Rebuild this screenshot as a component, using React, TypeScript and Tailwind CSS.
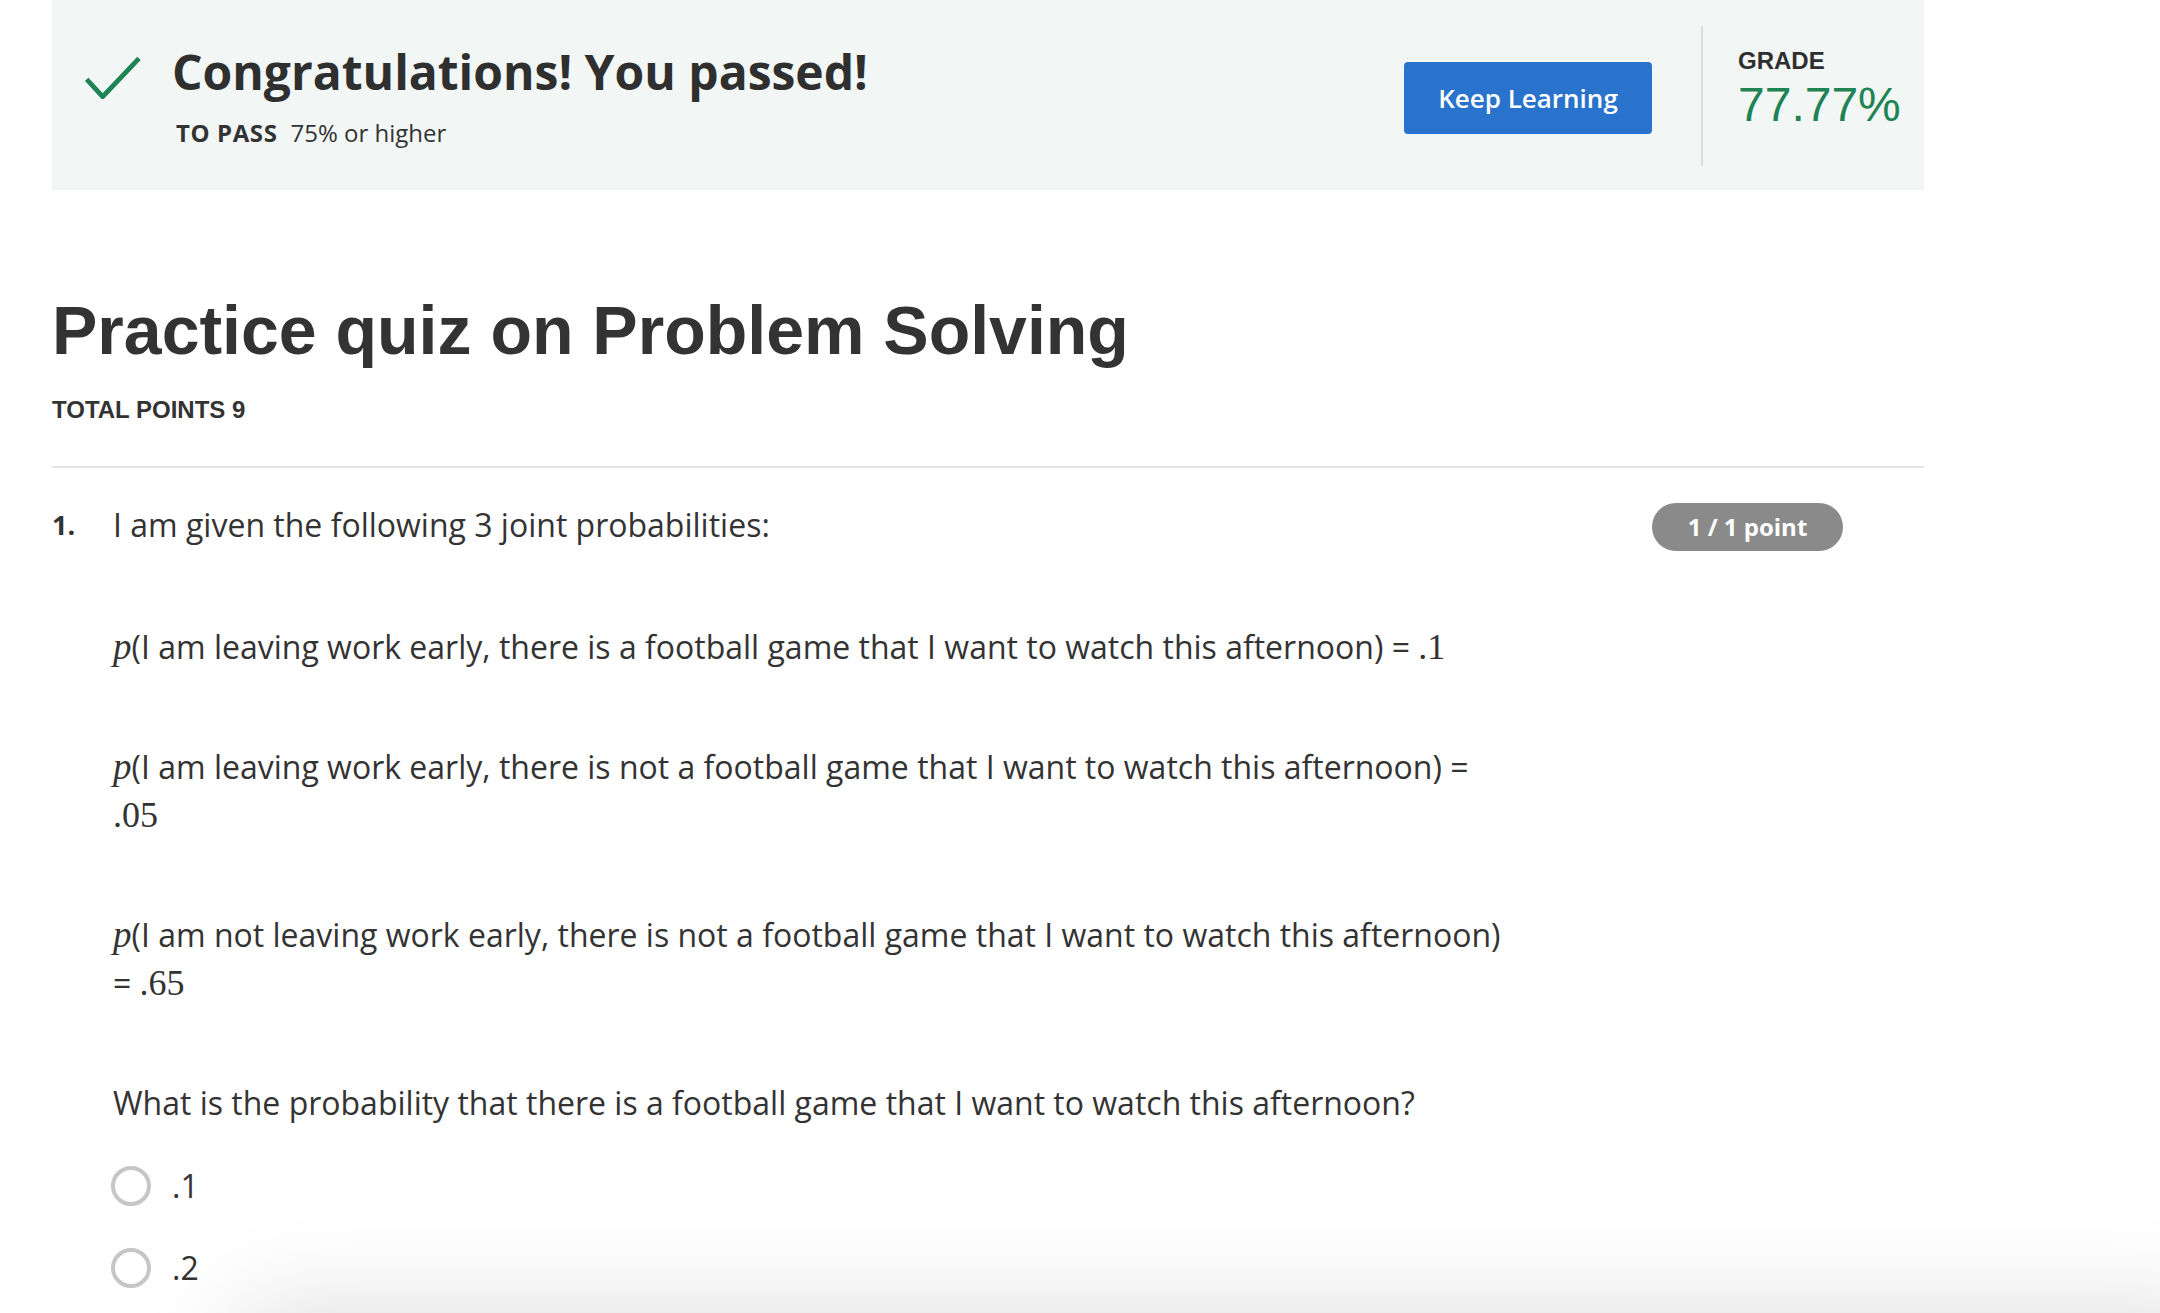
const Radio = ({ label, className }: { label: string; className?: string }) => (
    <div className={`flex h-[48px] items-center ${className ?? ""}`}>
        <span className="ml-[-2px] h-[40px] w-[40px] rounded-full border-[4px] border-[#c6c6c6] bg-white" />
        <span className="ml-[21px] text-[32px] leading-[48px]">{label}</span>
    </div>
);

const Pvar = () => <span className="font-['Liberation_Serif',serif] text-[37px] italic leading-none">p</span>;
const Num = ({ v }: { v: string }) => <span className="font-['Liberation_Serif',serif] text-[36px] leading-none">{v}</span>;

export default function App() {
    return (
        <div className="relative h-[1313px] w-full overflow-hidden bg-white font-['Open_Sans',sans-serif] text-[#333]">
            <div className="ml-[52px] w-[1872px]">
                {/* result banner */}
                <div className="flex h-[190px] bg-[#f2f7f5]">
                    <svg className="ml-[33px] mt-[55px] h-[44px] w-[56px] shrink-0" viewBox="0 0 56 44" fill="none">
                        <path d="M1.7 24.3 L17.7 41.7 L54 3.3" stroke="#1f8354" strokeWidth="4.8" />
                    </svg>
                    <div className="ml-[31px] pt-[43px]">
                        <h1 className="text-[48px] font-bold leading-[58px] text-[#2f2f2f]">Congratulations! You passed!</h1>
                        <div className="ml-[4px] mt-[17px] text-[24px] leading-[30px]">
                            <span className="font-bold tracking-[0.6px]">TO PASS</span>
                            <span className="ml-[13px]">75% or higher</span>
                        </div>
                    </div>
                    <div className="flex-1" />
                    <button className="mt-[62px] h-[72px] w-[248px] shrink-0 rounded-[4px] bg-[#2a73cc] text-[26px] font-semibold text-white">
                        Keep Learning
                    </button>
                    <div className="ml-[49px] mt-[26px] h-[140px] w-[2px] shrink-0 bg-[#dedede]" />
                    <div className="ml-[35px] w-[186px] shrink-0 font-['Liberation_Sans',Arial,sans-serif]">
                        <div className="mt-[47px] text-[24px] font-bold leading-[28px] text-[#2f2f2f]">GRADE</div>
                        <div className="mt-[2px] text-[48px] leading-[56px] text-[#1f8354]">77.77%</div>
                    </div>
                </div>

                {/* quiz header */}
                <h2 className="mt-[100px] font-['Liberation_Sans',Arial,sans-serif] text-[68px] font-bold leading-[80px] text-[#333]">
                    Practice quiz on Problem Solving
                </h2>
                <div className="mt-[26px] font-['Liberation_Sans',Arial,sans-serif] text-[24px] font-bold leading-[28px] text-[#333]">
                    TOTAL POINTS 9
                </div>
                <div className="mt-[42px] h-[2px] bg-[#e3e3e3]" />

                {/* question 1 */}
                <div className="mt-[33px] flex">
                    <div className="w-[61px] shrink-0 text-[27px] font-bold leading-[48px]">1.</div>
                    <div className="flex-1">
                        <div className="flex items-start justify-between">
                            <p className="text-[32px] leading-[48px]">I am given the following 3 joint probabilities:</p>
                            <span className="mr-[81px] mt-[2px] flex h-[48px] w-[191px] items-center justify-center rounded-full bg-[#8a8a8a] text-[24px] font-bold text-white">
                                1 / 1 point
                            </span>
                        </div>
                        <p className="mt-[72px] whitespace-nowrap text-[32px] leading-[48px]">
                            <Pvar />(I am leaving work early, there is a football game that I want to watch this afternoon) = <Num v=".1" />
                        </p>
                        <p className="mt-[72px] whitespace-nowrap text-[32px] leading-[48px]">
                            <Pvar />(I am leaving work early, there is not a football game that I want to watch this afternoon) =
                            <br />
                            <Num v=".05" />
                        </p>
                        <p className="mt-[72px] whitespace-nowrap text-[32px] leading-[48px]">
                            <Pvar />(I am not leaving work early, there is not a football game that I want to watch this afternoon)
                            <br />= <Num v=".65" />
                        </p>
                        <p className="mt-[72px] text-[32px] leading-[48px]">
                            What is the probability that there is a football game that I want to watch this afternoon?
                        </p>
                        <Radio label=".1" className="mt-[35px]" />
                        <Radio label=".2" className="mt-[34px]" />
                    </div>
                </div>
            </div>

            {/* edge of a floating panel below the fold */}
            <div className="absolute left-[240px] right-[-60px] top-[1318px] h-[120px] rounded-[12px] bg-white shadow-[0_0_110px_rgba(0,0,0,0.16)]" />
        </div>
    );
}
